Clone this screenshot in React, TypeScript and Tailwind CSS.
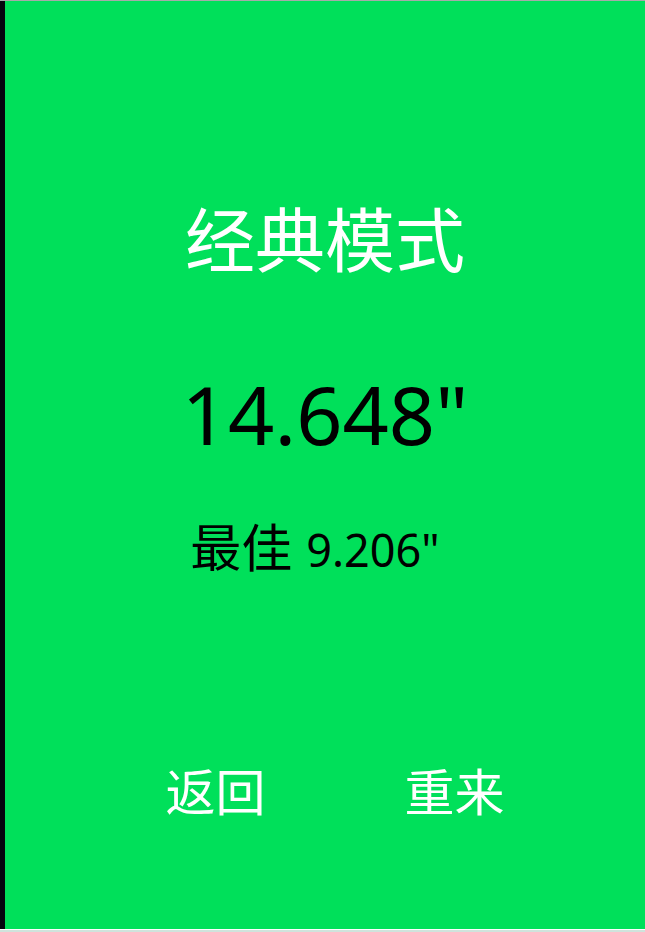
import React from 'react';

const font = { fontFamily: '"Noto Sans", "Noto Sans CJK SC", sans-serif' };

export default function App() {
  const time = '14.648"';
  const best = '9.206"';

  return (
    <div className="w-[645px] h-[932px] flex flex-col bg-white" style={font}>
      <div className="h-px bg-[#a7aaa9]" />
      <div className="flex flex-1">
        <div className="w-[5px] bg-[#05050f]" />
        <div className="flex-1 bg-[#00e05a] flex flex-col items-center">
          <h1 className="mt-[194px] text-[70px] leading-[90px] text-white">经典模式</h1>
          <div className="mt-[79px] text-[81px] leading-[100px] text-black">{time}</div>
          <div className="mt-[51px] h-[64px] flex items-baseline pr-[20px] text-[45px] leading-[64px] text-black">
            <span className="text-[51px] mr-[14px]">最佳</span>
            <span>{best}</span>
          </div>
          <div className="mt-[181px] flex gap-[139px] pl-[20px]">
            <button className="text-[50px] leading-[64px] text-white">返回</button>
            <button className="text-[50px] leading-[64px] text-white">重来</button>
          </div>
        </div>
      </div>
      <div className="h-px bg-white" />
      <div className="h-[2px] bg-[#cfe3dc]" />
    </div>
  );
}
